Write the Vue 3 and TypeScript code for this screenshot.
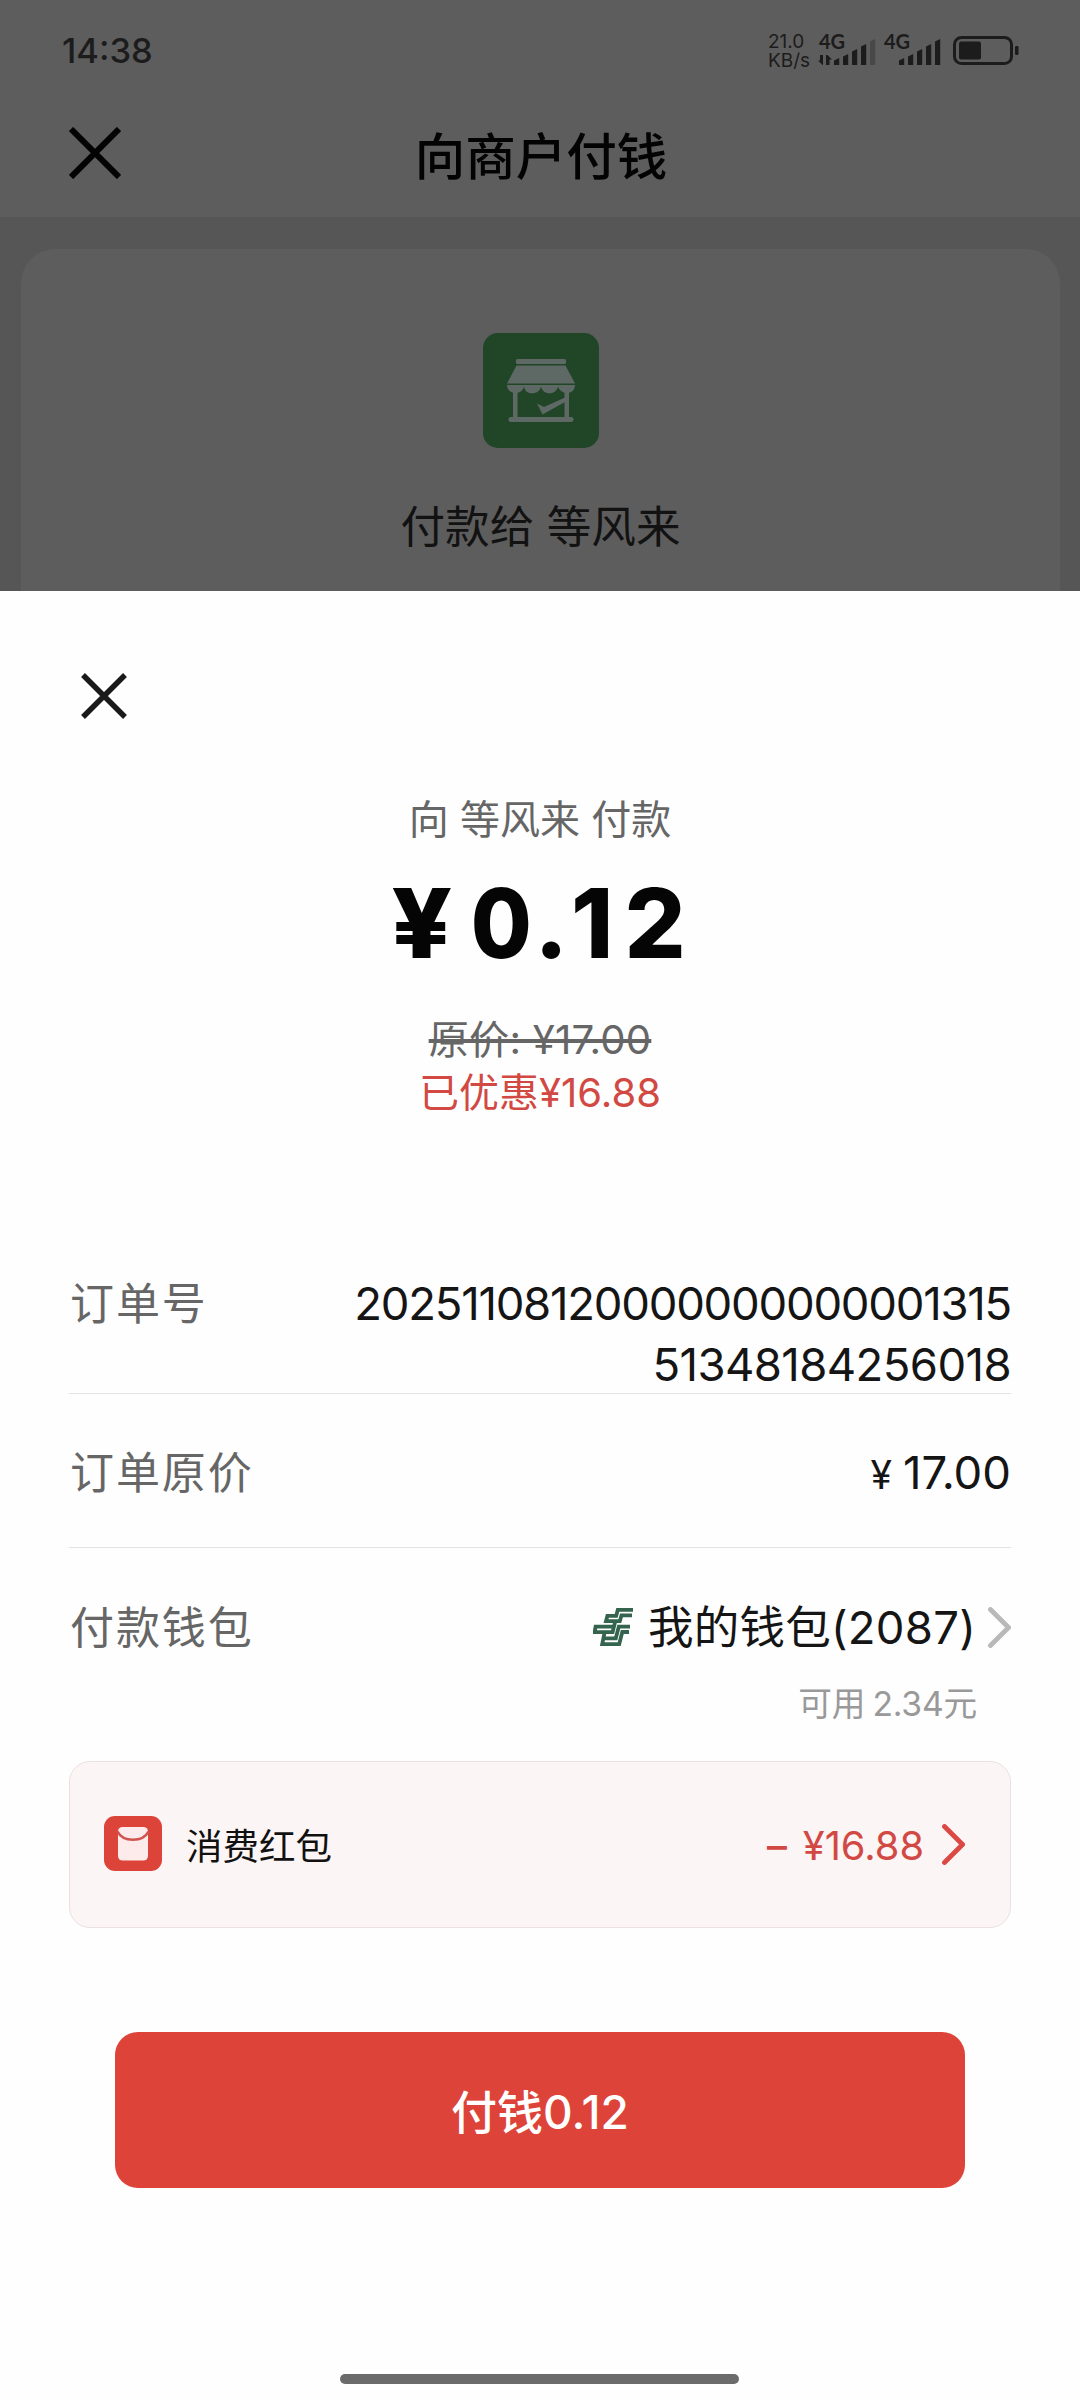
<script setup lang="ts">
interface SignalBar {
  x: number
  h: number
  dim?: boolean
}

const heights = [7, 11, 16, 21, 26]
const bars = (lastDim: boolean): SignalBar[] =>
  heights.map((h, i) => ({ x: i * 9, h, dim: lastDim && i === 4 }))
const simOne = bars(true)
const simTwo = bars(false)

const barPath = (b: SignalBar): string =>
  `M${b.x} 26V${26 - b.h + 2.5}L${b.x + 5.2} ${26 - b.h}V26Z`

const orderLines = ['20251108120000000000001315', '51348184256018']
</script>

<template>
  <div class="screen">
    <section class="top">
      <header class="status">
        <span class="time">14:38</span>
        <div class="indicators">
          <div class="speed"><span>21.0</span><span>KB/s</span></div>
          <div class="sim sim-one">
            <span class="net">4G</span>
            <svg class="arrows" width="14" height="10" viewBox="0 0 14 10">
              <path d="M0 5.500h2V0h3v10H4.500ZM8 0h1.500L14 4.500H11.500V10H8Z" fill="#1c1c1c" />
            </svg>
            <svg class="bars" width="42" height="26" viewBox="0 0 42 26">
              <path v-for="b in simOne" :key="b.x" :d="barPath(b)" :fill="b.dim ? '#484848' : '#1c1c1c'" />
            </svg>
          </div>
          <div class="sim sim-two">
            <span class="net">4G</span>
            <svg class="bars" width="42" height="26" viewBox="0 0 42 26">
              <path v-for="b in simTwo" :key="b.x" :d="barPath(b)" fill="#1c1c1c" />
            </svg>
          </div>
          <svg class="battery" width="66" height="29" viewBox="0 0 66 29">
            <rect x="1.500" y="1.500" width="57" height="26" rx="7" fill="none" stroke="#1c1c1c" stroke-width="3" />
            <rect x="6" y="5.500" width="22" height="18" rx="2" fill="#1c1c1c" />
            <rect x="62" y="10" width="3.500" height="9" rx="1.200" fill="#1c1c1c" />
          </svg>
        </div>
      </header>
      <nav class="nav">
        <svg class="nav-close" width="52" height="52" viewBox="0 0 52 52">
          <path d="M2 2 50 50M50 2 2 50" stroke="#030303" stroke-width="6" />
        </svg>
        <h1 class="title">向商户付钱</h1>
      </nav>
      <div class="payee-card">
        <svg class="shop" width="116" height="115" viewBox="0 0 116 115">
          <rect width="116" height="115" rx="15" fill="#204627" />
          <g fill="#5e6865">
            <rect x="33" y="26" width="50" height="5" rx="1.500" />
            <path d="M33.500 32.500H82.500L92 50.500H24Z" />
            <path d="M24 52H92C92 57 88.500 60 84 60S76 57 75 53.500C74 57.500 71 60.300 66.500 60.300S59 57.500 58 53.500C57 57.500 54 60.300 49 60.300S42 57.500 41 53.500C40 57.500 37 60 32.500 60S24 57 24 52Z" />
            <rect x="30" y="57" width="4.500" height="29" />
            <rect x="81.500" y="57" width="4.500" height="29" />
            <rect x="25.500" y="84" width="65" height="5" rx="2.300" />
            <path d="M54 70.500 61 74 82 64.500V69L59.500 81.500Z" />
          </g>
        </svg>
        <p class="payee">付款给 等风来</p>
      </div>
    </section>

    <section class="sheet">
      <svg class="sheet-close" width="46" height="46" viewBox="0 0 46 46">
        <path d="M2 2 44 44M44 2 2 44" stroke="#1a1a1a" stroke-width="5.400" />
      </svg>
      <p class="caption">向 等风来 付款</p>
      <p class="amount"><span class="yen">¥</span><span class="zero">0</span><span>.</span><span class="one">1</span><span class="two">2</span></p>
      <p class="original"><s>原价: ¥17.00</s></p>
      <p class="discount">已优惠¥16.88</p>

      <div class="row order">
        <span class="label">订单号</span>
        <span class="value">
          <span class="line-a">{{ orderLines[0] }}</span>
          <span class="line-b">{{ orderLines[1] }}</span>
        </span>
      </div>
      <div class="row price">
        <span class="label">订单原价</span>
        <span class="value price-value"><span class="small-yen">¥</span>17.00</span>
      </div>
      <div class="wallet">
        <span class="label">付款钱包</span>
        <span class="value wallet-value">
          <svg class="bank" width="40" height="38" viewBox="0 0 40 38">
            <g fill="none" stroke="#35644e" stroke-width="3.800">
              <path d="M40 1.800H24.800L23.200 7.800H14.400L13 13.200H26.800L28.500 7.400H39" />
              <path d="M21.300 18.600H2.600L1.600 24.200H19.600L22.200 13.500" />
              <path d="M37 18.600H25.800L22.800 30.300H11" />
              <path d="M36 24H29.300L26.200 36.200H9.200L11.600 24.500" />
            </g>
          </svg>
          <span class="wallet-name">我的钱包(2087)</span>
          <svg class="chevron" width="23" height="41" viewBox="0 0 23 41">
            <path d="M2.500 2.500 20.500 20.500 2.500 38.500" fill="none" stroke="#b9b9b9" stroke-width="4.800" stroke-linecap="round" />
          </svg>
        </span>
      </div>
      <p class="available">可用 2.34元</p>

      <div class="coupon">
        <svg class="packet" width="58" height="55" viewBox="0 0 58 55">
          <rect width="58" height="55" rx="11" fill="#dd4439" />
          <rect x="14" y="11" width="30" height="33.500" rx="4.500" fill="#fdeaea" />
          <path d="M13.500 15.500C19 26.500 39 26.500 44.500 15.500" fill="none" stroke="#cf5450" stroke-width="2.600" />
        </svg>
        <span class="coupon-name">消费红包</span>
        <span class="coupon-value"><span class="minus">–</span>¥16.88</span>
        <svg class="chevron" width="23" height="41" viewBox="0 0 23 41">
          <path d="M2.500 2.500 20.500 20.500 2.500 38.500" fill="none" stroke="#dc4844" stroke-width="4.800" stroke-linecap="round" />
        </svg>
      </div>

      <button class="pay" type="button">付钱0.12</button>
      <div class="home-bar"></div>
    </section>
  </div>
</template>

<style>
body {
  margin: 0;
}
</style>

<style scoped>
.screen {
  width: 1080px;
  height: 2400px;
  overflow: hidden;
  font-family: Inter, 'Noto Sans CJK SC', sans-serif;
  background: #fefefe;
}
p, h1 {
  margin: 0;
  font-weight: 400;
}
svg {
  display: block;
  flex: none;
}
.top {
  height: 591px;
  overflow: hidden;
  background: #565656;
}
.status {
  display: flex;
  justify-content: space-between;
  height: 100px;
  padding: 0 61px 0 62px;
  box-sizing: border-box;
  align-items: center;
  background: #5d5d5d;
  color: #1c1c1c;
}
.time {
  padding-top: 1px;
  font-size: 34.500px;
  line-height: 40px;
  font-weight: 500;
}
.indicators {
  display: flex;
  align-items: center;
}
.speed {
  display: flex;
  flex-direction: column;
  width: 50px;
  padding-top: 1px;
  font-size: 19px;
  line-height: 19px;
}
.sim {
  position: relative;
  height: 29px;
}
.sim-one {
  width: 65px;
}
.sim-two {
  width: 70px;
}
.net {
  position: absolute;
  top: -4px;
  left: 1px;
  font: 700 20px/19px Lato, sans-serif;
}
.arrows {
  position: absolute;
  left: 0;
  bottom: 0;
}
.bars {
  position: absolute;
  left: 16px;
  bottom: 0;
}
.nav {
  display: flex;
  align-items: center;
  height: 117px;
  padding: 0 69px 11px;
  box-sizing: border-box;
  background: #5d5d5d;
}
.title {
  flex: 1;
  margin-right: 50px;
  padding-top: 7px;
  text-align: center;
  font-size: 50.500px;
  line-height: 60px;
  font-weight: 500;
  color: #030303;
}
.payee-card {
  display: flex;
  flex-direction: column;
  align-items: center;
  height: 342px;
  margin: 32px 20px 0 21px;
  padding-top: 84px;
  box-sizing: border-box;
  border-radius: 34px 34px 0 0;
  background: #5d5d5d;
}
.payee {
  margin-top: 49px;
  font-size: 44.600px;
  line-height: 60px;
  color: #121212;
}
.sheet {
  height: 1809px;
  overflow: hidden;
  background: #fefefe;
  text-align: center;
}
.sheet-close {
  margin: 82px 0 0 81px;
}
.caption {
  margin-top: 71px;
  font-size: 40px;
  line-height: 60px;
  color: #666;
}
.amount {
  margin-top: 23px;
  font-size: 96px;
  line-height: 100px;
  font-weight: 850;
  color: #050505;
}
.yen {
  display: inline-block;
  margin-right: 18px;
  transform: scaleX(1.1);
}
.zero {
  display: inline-block;
  transform: scaleX(0.92);
}
.one {
  margin-left: 3px;
}
.two {
  margin-left: 11px;
}
.original {
  margin-top: 40px;
  font-size: 40.200px;
  line-height: 53px;
  letter-spacing: 0.200px;
  color: #666;
}
.discount {
  font-size: 40px;
  line-height: 53px;
  color: #d24944;
}
.row, .wallet {
  display: flex;
  justify-content: space-between;
  margin: 0 69px;
  box-sizing: border-box;
}
.row {
  border-bottom: 1px solid #e3e3e3;
}
.label {
  padding: 1px 0 0 1px;
  font-size: 44px;
  line-height: 60px;
  letter-spacing: 1.900px;
  color: #666;
}
.value {
  font-size: 45.500px;
  color: #151515;
}
.order {
  height: 121px;
  margin-top: 154px;
}
.order .value {
  display: flex;
  flex-direction: column;
  align-items: flex-end;
  line-height: 61px;
  letter-spacing: -0.600px;
}
.order .line-a {
  letter-spacing: -1.250px;
}
.price {
  height: 154px;
  padding-top: 4px;
  align-items: center;
}
.small-yen {
  font-size: 39px;
  margin-right: 11px;
}
.wallet {
  height: 109px;
  padding-top: 49px;
  line-height: 60px;
}
.wallet-value {
  display: flex;
  align-items: center;
}
.wallet-name {
  margin: 0 12px 0 15px;
  padding-top: 1px;
  letter-spacing: 0.250px;
}
.available {
  margin: 27px 103px 0 0;
  text-align: right;
  font-size: 33.700px;
  line-height: 40px;
  letter-spacing: -0.200px;
  word-spacing: -2px;
  color: #999;
}
.coupon {
  display: flex;
  align-items: center;
  height: 167px;
  margin: 37px 69px 0;
  padding: 0 45px 0 34px;
  box-sizing: border-box;
  border: 1px solid #ece0e1;
  border-radius: 21px;
  background: #fcf5f5;
}
.packet {
  margin-bottom: 2px;
}
.coupon-name {
  flex: 1;
  margin-left: 24px;
  text-align: left;
  font-size: 36.500px;
  color: #111;
}
.coupon-value {
  margin-right: 18px;
  padding-top: 2px;
  font-size: 39.800px;
  color: #d24944;
}
.minus {
  margin-right: 16px;
  font-weight: 500;
}
.pay {
  display: block;
  width: 850px;
  height: 156px;
  margin: 104px 115px 0;
  padding: 4px 0 0;
  border: 0;
  border-radius: 23px;
  background: #dd4339;
  color: #fff;
  font: 500 46px/60px Inter, 'Noto Sans CJK SC', sans-serif;
}
.home-bar {
  width: 399px;
  height: 10px;
  margin: 186px 0 0 340px;
  border-radius: 5px;
  background: #6b6b6b;
}
</style>
